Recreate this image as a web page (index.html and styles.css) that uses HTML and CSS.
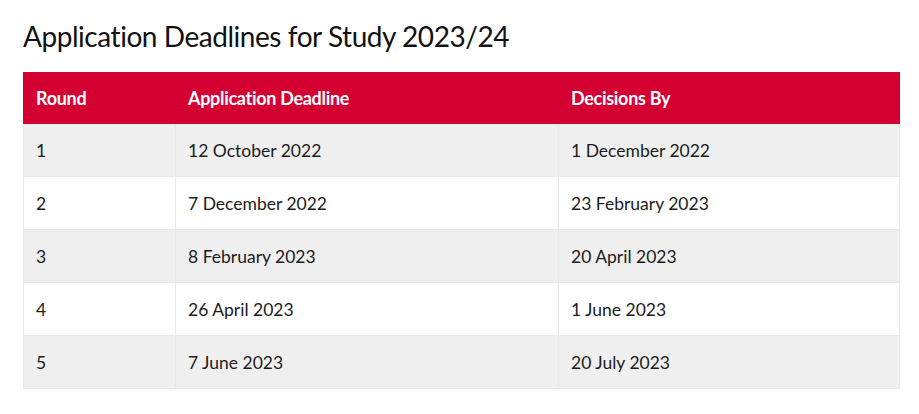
FILE: index.html
```html
<!DOCTYPE html>
<html lang="en">
<head>
<meta charset="utf-8">
<title>Application Deadlines</title>
<link rel="stylesheet" href="styles.css">
</head>
<body>
<main class="page">
  <h2 class="title">Application Deadlines for Study 2023/24</h2>
  <table class="deadlines">
    <colgroup>
      <col class="c-round">
      <col class="c-deadline">
      <col class="c-decision">
    </colgroup>
    <thead>
      <tr><th>Round</th><th>Application Deadline</th><th>Decisions By</th></tr>
    </thead>
    <tbody>
      <tr><td>1</td><td>12 October 2022</td><td>1 December 2022</td></tr>
      <tr><td>2</td><td>7 December 2022</td><td>23 February 2023</td></tr>
      <tr><td>3</td><td>8 February 2023</td><td>20 April 2023</td></tr>
      <tr><td>4</td><td>26 April 2023</td><td>1 June 2023</td></tr>
      <tr><td>5</td><td>7 June 2023</td><td>20 July 2023</td></tr>
    </tbody>
  </table>
</main>
</body>
</html>
```

FILE: styles.css
```css
html, body {
  margin: 0;
  padding: 0;
  background: #ffffff;
}
.page {
  padding: 19px 20px 0 23px;
  font-family: "Lato", "Open Sans", sans-serif;
  color: #1a1a1a;
}
.title {
  margin: 0 0 18px 0;
  font-size: 28px;
  line-height: 35px;
  font-weight: 400;
  color: #111111;
  letter-spacing: -0.45px;
}
.deadlines {
  width: 876px;
  border-collapse: collapse;
  table-layout: fixed;
}
.c-round { width: 152px; }
.c-deadline { width: 383px; }
.c-decision { width: 341px; }
.deadlines th,
.deadlines td {
  text-align: left;
  padding: 0 12px;
  height: 52px;
  border: 1px solid #e9e9e9;
}
.deadlines th {
  height: 50px;
  background: #d50032;
  color: #ffffff;
  font-weight: 700;
  font-size: 18px;
  letter-spacing: -0.3px;
  border-color: #d50032;
  border-left: 1px solid #ffffff;
}
.deadlines th:first-child { border-left-color: #d50032; }
.deadlines td {
  font-size: 17.5px;
  color: #1c1c1c;
}
.deadlines tbody tr:nth-child(odd) td { background: #efefef; }
.deadlines tbody tr:nth-child(even) td { background: #ffffff; }
```
